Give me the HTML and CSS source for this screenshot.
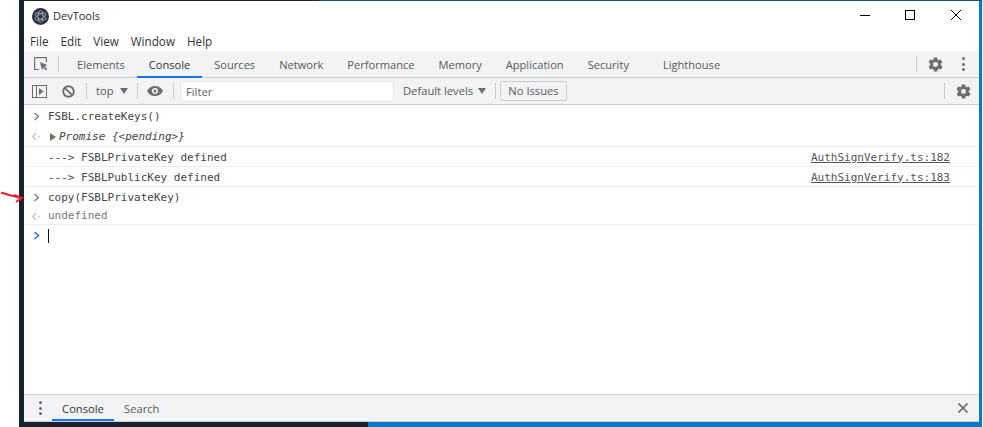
FILE: index.html
```html
<!DOCTYPE html>
<html lang="en">
<head>
<meta charset="utf-8">
<title>DevTools</title>
<link rel="stylesheet" href="styles.css">
</head>
<body>
<div class="frame">
  <div class="desktop">
    <div class="topstrip"></div>
    <main class="window">
      <header class="titlebar">
        <svg class="app-logo" width="17" height="17" viewBox="0 0 20 20"><circle cx="10" cy="10" r="10" fill="#2f3241"/><g fill="none" stroke="#a6aeb8" stroke-width="1"><ellipse cx="10" cy="10" rx="7" ry="3" transform="rotate(30 10 10)"/><ellipse cx="10" cy="10" rx="7" ry="3" transform="rotate(90 10 10)"/><ellipse cx="10" cy="10" rx="7" ry="3" transform="rotate(150 10 10)"/></g></svg>
        <span class="app-title">DevTools</span>
        <div class="win-controls">
          <svg width="46" height="30" viewBox="0 0 46 30"><path d="M19 14.500h10" stroke="#000"/></svg>
          <svg width="46" height="30" viewBox="0 0 46 30"><rect x="18.500" y="9.500" width="9" height="9" fill="none" stroke="#000"/></svg>
          <svg width="46" height="30" viewBox="0 0 46 30"><path d="M18 9l10 10M28 9l-10 10" stroke="#000"/></svg>
        </div>
      </header>
      <nav class="menubar">
        <span>File</span><span>Edit</span><span>View</span><span>Window</span><span>Help</span>
      </nav>
      <div class="tabbar">
        <svg class="inspect" width="14" height="14" viewBox="0 0 14 14"><path d="M5 12.500H.6V.6h11.800V5" fill="none" stroke="#6e6e6e" stroke-width="1.200"/><path d="M6 5l7.500 3.200-3 1 2.700 2.800-1.300 1.300-2.800-2.800-1 3z" fill="#6e6e6e"/></svg>
        <i class="sep sep-tab"></i>
        <div class="tabs">
          <span class="tab">Elements</span>
          <span class="tab active">Console</span>
          <span class="tab">Sources</span>
          <span class="tab">Network</span>
          <span class="tab">Performance</span>
          <span class="tab">Memory</span>
          <span class="tab">Application</span>
          <span class="tab">Security</span>
          <span class="tab lighthouse">Lighthouse</span>
        </div>
        <i class="sep sep-end"></i>
        <svg class="gear" width="17" height="17" viewBox="0 0 24 24"><path fill="#6e6e6e" fill-rule="evenodd" d="M19.400 13a7.500 7.500 0 0 0 0-2l2.100-1.700a.5.5 0 0 0 .1-.6l-2-3.500a.5.5 0 0 0-.6-.2l-2.500 1a7.300 7.300 0 0 0-1.700-1l-.4-2.600a.5.5 0 0 0-.5-.4h-4a.5.5 0 0 0-.5.4L9.200 5a7.300 7.300 0 0 0-1.700 1l-2.500-1a.5.5 0 0 0-.6.2l-2 3.500a.5.5 0 0 0 .1.6L4.600 11a7.500 7.500 0 0 0 0 2l-2.100 1.700a.5.5 0 0 0-.1.6l2 3.500a.5.5 0 0 0 .6.2l2.500-1a7.300 7.300 0 0 0 1.700 1l.4 2.600a.5.5 0 0 0 .5.4h4a.5.5 0 0 0 .5-.4l.4-2.600a7.300 7.300 0 0 0 1.700-1l2.500 1a.5.5 0 0 0 .6-.2l2-3.500a.5.5 0 0 0-.1-.6zM12 15.500a3.500 3.500 0 1 1 0-7 3.500 3.500 0 0 1 0 7z"/></svg>
        <span class="dots dots-top"><b></b><b></b><b></b></span>
      </div>
      <div class="toolbar">
        <svg class="sidebar-icon" width="15" height="13" viewBox="0 0 15 13"><rect x=".5" y=".5" width="14" height="12" fill="none" stroke="#6e6e6e"/><path d="M4.500 0v13" stroke="#6e6e6e"/><path d="M7 3l4.500 3.500L7 10z" fill="#6e6e6e"/></svg>
        <svg class="clear-icon" width="13" height="13" viewBox="0 0 14 14"><circle cx="7" cy="7" r="5.700" fill="none" stroke="#6e6e6e" stroke-width="2"/><path d="M3 3l8 8" stroke="#6e6e6e" stroke-width="2"/></svg>
        <i class="sep sep-a"></i>
        <span class="ctx">top</span><i class="caret caret-top"></i>
        <i class="sep sep-b"></i>
        <svg class="eye" width="16" height="10" viewBox="0 0 16 10"><path fill="#6e6e6e" fill-rule="evenodd" d="M8 0c3.600 0 6.600 2 8 5-1.400 3-4.400 5-8 5S1.400 8 0 5c1.400-3 4.400-5 8-5zm0 2a3 3 0 1 0 0 6 3 3 0 0 0 0-6zm0 1.500a1.500 1.500 0 1 1 0 3 1.500 1.500 0 0 1 0-3z"/></svg>
        <i class="sep sep-c"></i>
        <input class="filter" placeholder="Filter" aria-label="Filter">
        <span class="levels">Default levels</span><i class="caret caret-levels"></i>
        <i class="sep sep-d"></i>
        <span class="issues">No Issues</span>
        <i class="sep sep-e"></i>
        <svg class="gear" width="17" height="17" viewBox="0 0 24 24"><path fill="#6e6e6e" fill-rule="evenodd" d="M19.400 13a7.500 7.500 0 0 0 0-2l2.100-1.700a.5.5 0 0 0 .1-.6l-2-3.500a.5.5 0 0 0-.6-.2l-2.500 1a7.300 7.300 0 0 0-1.700-1l-.4-2.600a.5.5 0 0 0-.5-.4h-4a.5.5 0 0 0-.5.4L9.200 5a7.300 7.300 0 0 0-1.700 1l-2.500-1a.5.5 0 0 0-.6.2l-2 3.500a.5.5 0 0 0 .1.6L4.600 11a7.500 7.500 0 0 0 0 2l-2.100 1.700a.5.5 0 0 0-.1.6l2 3.500a.5.5 0 0 0 .6.2l2.500-1a7.300 7.300 0 0 0 1.700 1l.4 2.600a.5.5 0 0 0 .5.4h4a.5.5 0 0 0 .5-.4l.4-2.600a7.300 7.300 0 0 0 1.700-1l2.500 1a.5.5 0 0 0 .6-.2l2-3.500a.5.5 0 0 0-.1-.6zM12 15.500a3.500 3.500 0 1 1 0-7 3.500 3.500 0 0 1 0 7z"/></svg>
      </div>
      <section class="console">
        <div class="row in first"><svg class="chev" width="7" height="9" viewBox="0 0 7 9"><path d="M1.500 1l4 3.500-4 3.500" fill="none" stroke="#777" stroke-width="1.200"/></svg><span>FSBL.createKeys()</span></div>
        <div class="row out line promise"><svg class="back" width="9" height="9" viewBox="0 0 9 9"><path d="M4 1L1 4.500 4 8" fill="none" stroke="#aaa" stroke-width="1.100"/><circle cx="7" cy="4.500" r=".8" fill="#bbb"/></svg><i class="tri"></i><em>Promise {&lt;pending&gt;}</em></div>
        <div class="row log line"><span>---&gt; FSBLPrivateKey defined</span><a>AuthSignVerify.ts:182</a></div>
        <div class="row log line"><span>---&gt; FSBLPublicKey defined</span><a>AuthSignVerify.ts:183</a></div>
        <div class="row in"><svg class="chev" width="7" height="9" viewBox="0 0 7 9"><path d="M1.500 1l4 3.500-4 3.500" fill="none" stroke="#777" stroke-width="1.200"/></svg><span>copy(FSBLPrivateKey)</span></div>
        <div class="row out line undefined"><svg class="back" width="9" height="9" viewBox="0 0 9 9"><path d="M4 1L1 4.500 4 8" fill="none" stroke="#aaa" stroke-width="1.100"/><circle cx="7" cy="4.500" r=".8" fill="#bbb"/></svg><span>undefined</span></div>
        <div class="row prompt"><svg class="chev" width="7" height="9" viewBox="0 0 7 9"><path d="M1.500 1l4 3.500-4 3.500" fill="none" stroke="#1a73e8" stroke-width="1.500"/></svg><i class="cursor"></i></div>
      </section>
      <footer class="drawer">
        <span class="dots dots-drawer"><b></b><b></b><b></b></span>
        <span class="dtab active">Console</span>
        <span class="dtab">Search</span>
        <svg class="close" width="10" height="10" viewBox="0 0 10 10"><path d="M.5.500l9 9M9.500.500l-9 9" stroke="#6e6e6e" stroke-width="1.600"/></svg>
      </footer>
    </main>
  </div>
  <svg class="arrow" width="24" height="16" viewBox="0 0 24 16"><path d="M1 4.500l10 3 11 2.500" stroke="#ee1c25" stroke-width="2" fill="none"/><path d="M14 7l8 3-6 4" stroke="#ee1c25" stroke-width="2" fill="none"/></svg>
</div>
</body>
</html>
```
FILE: styles.css
```css
* { box-sizing: border-box; }
html, body { margin: 0; height: 100%; overflow: hidden; background: #fff; }
body { font: 11.200px/16px "Open Sans", "Liberation Sans", sans-serif; color: #5a5a5a; }
.frame { position: relative; display: flex; width: 983px; height: 427px; padding: 0 1px 0 19px; }
.desktop { display: flex; flex-direction: column; width: 963px; height: 427px; background: linear-gradient(90deg, #17232e 349px, #0a78c4 349px); }
.topstrip { height: 1px; flex: none; background: linear-gradient(90deg, #17232e 300px, #154e6e 300px); }
.window { display: flex; flex-direction: column; flex: 1; margin: 0 3px 5px 5px; background: #fff; }
.titlebar { display: flex; align-items: center; height: 30px; flex: none; padding-left: 8px; }
.app-logo { margin-right: 4px; }
.app-title { color: #2a2a2a; font-size: 11px; }
.win-controls { display: flex; margin-left: auto; }
.menubar { display: flex; gap: 12px; height: 20px; flex: none; align-items: center; padding-left: 6px; color: #333; font-size: 11.700px; }
.tabbar { display: flex; align-items: center; height: 27px; flex: none; background: #f1f3f4; border-bottom: 1px solid #cbcdd1; padding-left: 10px; }
.sep { display: block; width: 1px; height: 16px; background: #cbcdd1; flex: none; }
.sep-tab { margin-left: 10px; }
.tabs { display: flex; height: 26px; margin-left: 6px; }
.tab { padding: 0 12px; font-size: 11.100px; line-height: 27px; color: #5a5a5a; white-space: nowrap; }
.tab.active { color: #333; border-bottom: 2px solid #1a73e8; height: 27px; }
.lighthouse { margin-left: 10px; }
.sep-end { margin-left: auto; }
.tabbar .gear { margin-left: 10px; }
.dots { display: flex; flex-direction: column; gap: 2.500px; }
.dots b { display: block; width: 3px; height: 3px; border-radius: 50%; background: #6e6e6e; }
.dots-top { margin: 0 14px 0 18px; }
.toolbar { display: flex; align-items: center; height: 27px; flex: none; background: #f1f3f4; border-bottom: 1px solid #cbcdd1; padding-left: 8px; }
.clear-icon { margin-left: 15px; }
.sep-a { margin-left: 11px; }
.ctx { margin-left: 9px; width: 18px; }
.caret { display: block; width: 0; height: 0; border: 4px solid transparent; border-top: 6px solid #6e6e6e; border-bottom: 0; }
.caret-top { margin-left: 6px; }
.caret-levels { margin-left: 5px; }
.sep-b { margin-left: 9px; }
.eye { margin-left: 9px; }
.sep-c { margin-left: 10px; }
.filter { width: 214px; height: 21px; margin-left: 6px; border: 1px solid #e4e6e8; background: #fff; padding: 0 5px; font: 11.200px "Open Sans", "Liberation Sans", sans-serif; outline: none; }
.filter::placeholder { color: #5f6368; opacity: 1; }
.levels { margin-left: 9px; width: 70px; white-space: nowrap; }
.sep-d { margin-left: 9px; }
.issues { margin-left: 4px; width: 67px; height: 20px; line-height: 18px; text-align: center; border: 1px solid #cbcdd1; border-radius: 2px; white-space: nowrap; }
.sep-e { margin-left: auto; }
.toolbar .gear { margin: 0 7px 0 10px; }
.console { flex: 1; font: 11px/14px "DejaVu Sans Mono", "Liberation Mono", monospace; color: #444; }
.row { display: flex; align-items: center; height: 20px; padding: 1px 0 0 8px; }
.row.first { height: 21px; padding-top: 2px; }
.row.promise { height: 21px; }
.row > span { white-space: pre; margin-left: 8px; }
.row.line { border-bottom: 1px solid #eceef0; }
.out .back { margin-right: 7px; }
.row.log { padding: 2px 0 0 24px; }
.log > span { margin-left: 0; }
.log a { margin-left: auto; margin-right: 29px; text-decoration: underline; color: #555; }
.tri { display: block; width: 0; height: 0; border: 4px solid transparent; border-left: 6px solid #6e6e6e; border-right: 0; margin: 0 3px 0 2px; }
em { color: #444; }
.undefined { height: 18px; }
.undefined span { margin-left: 0; color: #777; }
.chev { margin-left: 1px; }
.cursor { display: block; width: 1px; height: 14px; background: #111; margin-left: 8px; }
.drawer { display: flex; align-items: center; height: 28px; flex: none; background: #f1f3f4; border-top: 1px solid #cbcdd1; border-bottom: 1px solid #cbcdd1; padding-left: 15px; }
.dtab { padding: 0 10px; line-height: 27px; height: 26px; }
.dtab.active { color: #333; border-bottom: 2px solid #1a73e8; width: 62px; text-align: center; margin-left: 10px; padding: 0; }
.drawer .close { margin-left: auto; margin-right: 11px; }
.arrow { position: absolute; left: 0; top: 188px; }
```
